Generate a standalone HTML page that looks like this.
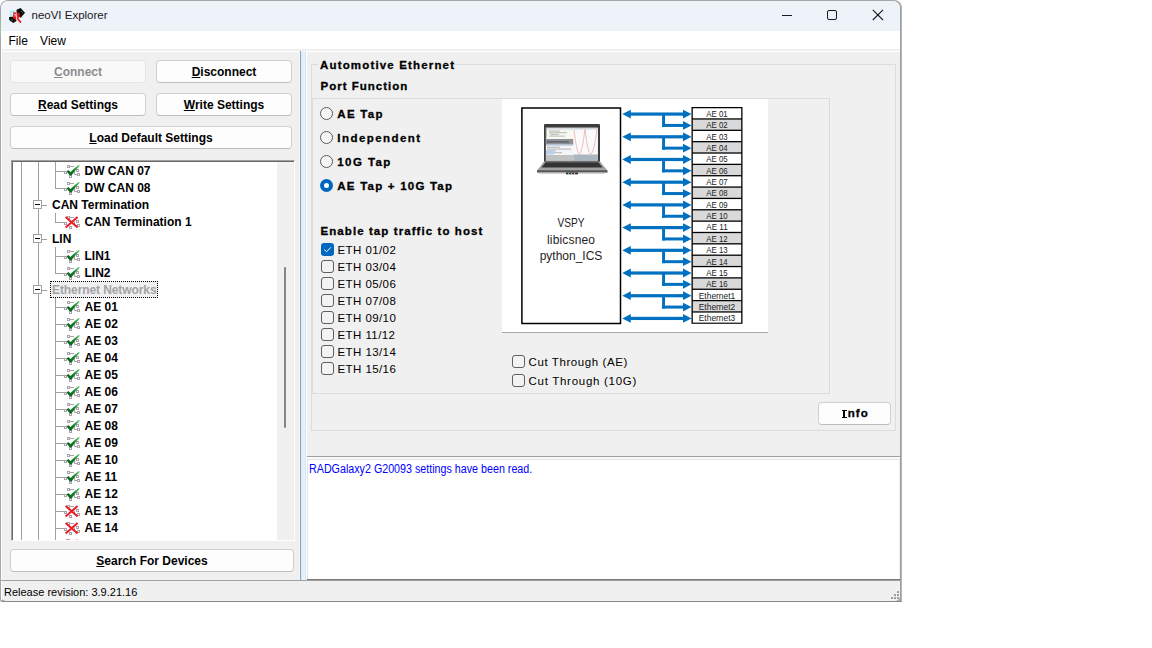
<!DOCTYPE html>
<html><head><meta charset="utf-8"><style>
html,body{margin:0;padding:0;background:#fff;}
body{width:1152px;height:648px;position:relative;overflow:hidden;font-family:"Liberation Sans",sans-serif;}
.r{position:absolute;}
.t{position:absolute;white-space:pre;line-height:1;}
svg text{font-family:"Liberation Sans",sans-serif;}
u{text-decoration:underline;text-underline-offset:1px;}
</style></head><body>
<div class="r" style="left:0px;top:0px;width:902px;height:602px;background:#a8a8a8;border-radius:8px 8px 2px 2px;"></div>
<div class="r" style="left:901px;top:8px;width:1px;height:593px;background:#b4b4b4;"></div>
<div class="r" style="left:900px;top:8px;width:1px;height:593px;background:#a0a0a0;"></div>
<div class="r" style="left:2px;top:601px;width:900px;height:1px;background:#888;"></div>
<div class="r" style="left:0px;top:22px;width:1px;height:14px;background:#a3bfa3;"></div>
<div class="r" style="left:1px;top:1px;width:899px;height:600px;background:#f0f0f0;border-radius:7px 7px 5px 5px;"></div>
<div class="r" style="left:1px;top:1px;width:899px;height:30px;background:#eef2f9;border-radius:7px 7px 0 0;"></div>
<div class="r" style="left:1px;top:31px;width:899px;height:18px;background:#fff;"></div>
<div class="r" style="left:1px;top:49px;width:899px;height:2px;background:#f0f0f0;"></div>
<div class="r" style="left:1px;top:51px;width:298px;height:1px;background:#fff;"></div>
<div class="r" style="left:307px;top:51px;width:593px;height:1px;background:#fff;"></div>
<div class="r" style="left:1px;top:31px;width:1px;height:569px;background:#fff;"></div>
<svg class="r" style="left:6px;top:4px" width="24" height="24" viewBox="6 4 24 24">
<path d="M16.5 9.8 L20.6 8.0 L25 12.8 L20.8 17.8 L16.8 15.2 Z" fill="#0a0a0a"/>
<path d="M21.2 11 L23 13" stroke="#2a7f6f" stroke-width="0.9"/>
<path d="M9 17.2 L13 16 L16.8 20.8 L13.2 23 L9.2 20 Z" fill="#0a0a0a"/>
<path d="M11 19.2 L13 20.6" stroke="#2a8080" stroke-width="0.9"/>
<path d="M10 11.6 L14.8 10.6 L15.6 13.5 L14.8 17 L10.6 16.8 Z" fill="#9fe3f3"/>
<path d="M11 12.5 L13 12 L13.5 15.5 L11.5 15.5 Z" fill="#d8f4fb"/>
<path d="M13.2 12.6 L16.2 12.6 L16.2 19.4 L13.2 18.6 Z" fill="#f21414"/>
<path d="M17 12.8 L19.6 12.8 L19.4 17.6 L17 18.6 Z" fill="#f21414"/>
<path d="M14 14.5 L15.6 14.3 L15.2 16.6" stroke="#e6e6f0" stroke-width="0.8" fill="none"/>
<path d="M17.3 18.3 L20.9 22.6" stroke="#f01818" stroke-width="1.7"/>
</svg>
<div class="t" style="left:31.5px;top:10.07px;font-size:11.5px;font-weight:400;color:#1a1a1a;">neoVI Explorer</div>
<div class="r" style="left:782px;top:15px;width:10px;height:1px;background:#1a1a1a;"></div>
<div class="r" style="left:827px;top:10px;width:10px;height:10px;border:1px solid #1a1a1a;border-radius:2px;box-sizing:border-box;"></div>
<svg class="r" style="left:872px;top:9px" width="12" height="12" viewBox="0 0 12 12">
<path d="M0.8 0.8 L11 11 M11 0.8 L0.8 11" stroke="#1a1a1a" stroke-width="1.1"/></svg>
<div class="t" style="left:8.5px;top:34.74px;font-size:12px;font-weight:400;color:#000;">File</div>
<div class="t" style="left:40.1px;top:34.74px;font-size:12px;font-weight:400;color:#000;">View</div>
<div class="r" style="left:10px;top:60px;width:136px;height:23px;background:#f9f9f9;border:1px solid #e4e4e4;border-bottom-color:#e4e4e4;border-radius:4px;box-sizing:border-box;"></div>
<div class="t" style="left:10px;top:65.84px;width:136px;text-align:center;font-size:12px;font-weight:700;color:#8d8d8d;letter-spacing:0px"><u>C</u>onnect</div>
<div class="r" style="left:156px;top:60px;width:136px;height:23px;background:#fdfdfd;border:1px solid #d0d0d0;border-bottom-color:#bdbdbd;border-radius:4px;box-sizing:border-box;"></div>
<div class="t" style="left:156px;top:65.84px;width:136px;text-align:center;font-size:12px;font-weight:700;color:#000;letter-spacing:0px"><u>D</u>isconnect</div>
<div class="r" style="left:10px;top:93px;width:136px;height:23px;background:#fdfdfd;border:1px solid #d0d0d0;border-bottom-color:#bdbdbd;border-radius:4px;box-sizing:border-box;"></div>
<div class="t" style="left:10px;top:98.84px;width:136px;text-align:center;font-size:12px;font-weight:700;color:#000;letter-spacing:0px"><u>R</u>ead Settings</div>
<div class="r" style="left:156px;top:93px;width:136px;height:23px;background:#fdfdfd;border:1px solid #d0d0d0;border-bottom-color:#bdbdbd;border-radius:4px;box-sizing:border-box;"></div>
<div class="t" style="left:156px;top:98.84px;width:136px;text-align:center;font-size:12px;font-weight:700;color:#000;letter-spacing:0px"><u>W</u>rite Settings</div>
<div class="r" style="left:10px;top:126px;width:282px;height:23px;background:#fdfdfd;border:1px solid #d0d0d0;border-bottom-color:#bdbdbd;border-radius:4px;box-sizing:border-box;"></div>
<div class="t" style="left:10px;top:131.84px;width:282px;text-align:center;font-size:12px;font-weight:700;color:#000;letter-spacing:0px"><u>L</u>oad Default Settings</div>
<div class="r" style="left:10px;top:549px;width:284px;height:23px;background:#fdfdfd;border:1px solid #d0d0d0;border-bottom-color:#bdbdbd;border-radius:4px;box-sizing:border-box;"></div>
<div class="t" style="left:10px;top:554.84px;width:284px;text-align:center;font-size:12px;font-weight:700;color:#000;letter-spacing:0px"><u>S</u>earch For Devices</div>
<div class="r" style="left:11px;top:160px;width:284px;height:381px;background:#fff;border-top:1px solid #a0a0a0;border-left:1px solid #a0a0a0;border-right:1px solid #fff;border-bottom:1px solid #fff;box-sizing:border-box;"></div>
<div class="r" style="left:12px;top:161px;width:282px;height:379px;border-top:1px solid #696969;border-left:1px solid #696969;box-sizing:border-box;"></div>
<div class="r" style="left:277px;top:162px;width:17px;height:378px;background:#f0f0f0;"></div>
<div class="r" style="left:284px;top:267px;width:2px;height:161px;background:#858585;border-radius:1px;"></div>
<div class="r" style="left:13px;top:162px;width:264px;height:378px;overflow:hidden">
<div class="r" style="left:8px;top:0px;width:1px;height:378px;background:#a0a0a0"></div>
<div class="r" style="left:25px;top:0px;width:1px;height:38px;background:#a0a0a0"></div>
<div class="r" style="left:25px;top:47px;width:1px;height:25px;background:#a0a0a0"></div>
<div class="r" style="left:25px;top:81px;width:1px;height:42px;background:#a0a0a0"></div>
<div class="r" style="left:25px;top:132px;width:1px;height:246px;background:#a0a0a0"></div>
<div class="r" style="left:42px;top:0px;width:1px;height:27px;background:#a0a0a0"></div>
<div class="r" style="left:42px;top:51px;width:1px;height:10px;background:#a0a0a0"></div>
<div class="r" style="left:42px;top:85px;width:1px;height:27px;background:#a0a0a0"></div>
<div class="r" style="left:42px;top:136px;width:1px;height:242px;background:#a0a0a0"></div>
<div class="r" style="left:43px;top:9px;width:9px;height:1px;background:#a0a0a0"></div>
<svg class="r" style="left:51px;top:3px" width="18" height="16" viewBox="0 0 18 16">
<g fill="none" stroke="#aaa3ab" stroke-width="1">
<rect x="3.5" y="0.5" width="2" height="2"/><rect x="0.5" y="6.5" width="2" height="2"/>
<rect x="12.5" y="4.5" width="2" height="2"/><rect x="13.5" y="8.5" width="2" height="2"/>
<rect x="5.5" y="10.5" width="2" height="2"/>
<path d="M6 1.5 H10 M10.5 5.5 V9.5 H13"/>
</g>
<defs><linearGradient id="gck" x1="0" y1="1" x2="1" y2="0"><stop offset="0" stop-color="#075a16"/><stop offset="0.5" stop-color="#0f8026"/><stop offset="1" stop-color="#6fcf82"/></linearGradient></defs><path d="M2.6 6.4 L4.3 5.0 L6.5 7.0 Q10.2 3.2 14.6 0.0 L15.9 0.7 Q11.2 5.0 7.4 10.4 L6.0 10.4 Z" fill="url(#gck)"/>
</svg>
<div class="t" style="left:71.5px;top:2.84px;font-size:12px;font-weight:700;color:#000;">DW CAN 07</div>
<div class="r" style="left:43px;top:26px;width:9px;height:1px;background:#a0a0a0"></div>
<svg class="r" style="left:51px;top:20px" width="18" height="16" viewBox="0 0 18 16">
<g fill="none" stroke="#aaa3ab" stroke-width="1">
<rect x="3.5" y="0.5" width="2" height="2"/><rect x="0.5" y="6.5" width="2" height="2"/>
<rect x="12.5" y="4.5" width="2" height="2"/><rect x="13.5" y="8.5" width="2" height="2"/>
<rect x="5.5" y="10.5" width="2" height="2"/>
<path d="M6 1.5 H10 M10.5 5.5 V9.5 H13"/>
</g>
<defs><linearGradient id="gck" x1="0" y1="1" x2="1" y2="0"><stop offset="0" stop-color="#075a16"/><stop offset="0.5" stop-color="#0f8026"/><stop offset="1" stop-color="#6fcf82"/></linearGradient></defs><path d="M2.6 6.4 L4.3 5.0 L6.5 7.0 Q10.2 3.2 14.6 0.0 L15.9 0.7 Q11.2 5.0 7.4 10.4 L6.0 10.4 Z" fill="url(#gck)"/>
</svg>
<div class="t" style="left:71.5px;top:19.84px;font-size:12px;font-weight:700;color:#000;">DW CAN 08</div>
<div class="r" style="left:20px;top:38px;width:9px;height:9px;border:1px solid #a0a0a0;box-sizing:border-box;background:#fff"></div>
<div class="r" style="left:22px;top:42px;width:5px;height:1px;background:#000"></div>
<div class="r" style="left:29px;top:43px;width:5px;height:1px;background:#a0a0a0"></div>
<div class="t" style="left:39px;top:36.84px;font-size:12px;font-weight:700;color:#000;">CAN Termination</div>
<div class="r" style="left:43px;top:60px;width:9px;height:1px;background:#a0a0a0"></div>
<svg class="r" style="left:51px;top:54px" width="18" height="16" viewBox="0 0 18 16">
<g fill="none" stroke="#aaa3ab" stroke-width="1">
<rect x="3.5" y="0.5" width="2" height="2"/><rect x="0.5" y="6.5" width="2" height="2"/>
<rect x="12.5" y="4.5" width="2" height="2"/><rect x="13.5" y="8.5" width="2" height="2"/>
<rect x="5.5" y="10.5" width="2" height="2"/>
<path d="M6 1.5 H10 M10.5 5.5 V9.5 H13"/>
</g>
<path d="M1.6 1.0 L13.6 11.4 M13.6 1.0 L1.6 11.4" fill="none" stroke="#ec1c24" stroke-width="2"/>
</svg>
<div class="t" style="left:71.5px;top:53.84px;font-size:12px;font-weight:700;color:#000;">CAN Termination 1</div>
<div class="r" style="left:20px;top:72px;width:9px;height:9px;border:1px solid #a0a0a0;box-sizing:border-box;background:#fff"></div>
<div class="r" style="left:22px;top:76px;width:5px;height:1px;background:#000"></div>
<div class="r" style="left:29px;top:77px;width:5px;height:1px;background:#a0a0a0"></div>
<div class="t" style="left:39px;top:70.84px;font-size:12px;font-weight:700;color:#000;">LIN</div>
<div class="r" style="left:43px;top:94px;width:9px;height:1px;background:#a0a0a0"></div>
<svg class="r" style="left:51px;top:88px" width="18" height="16" viewBox="0 0 18 16">
<g fill="none" stroke="#aaa3ab" stroke-width="1">
<rect x="3.5" y="0.5" width="2" height="2"/><rect x="0.5" y="6.5" width="2" height="2"/>
<rect x="12.5" y="4.5" width="2" height="2"/><rect x="13.5" y="8.5" width="2" height="2"/>
<rect x="5.5" y="10.5" width="2" height="2"/>
<path d="M6 1.5 H10 M10.5 5.5 V9.5 H13"/>
</g>
<defs><linearGradient id="gck" x1="0" y1="1" x2="1" y2="0"><stop offset="0" stop-color="#075a16"/><stop offset="0.5" stop-color="#0f8026"/><stop offset="1" stop-color="#6fcf82"/></linearGradient></defs><path d="M2.6 6.4 L4.3 5.0 L6.5 7.0 Q10.2 3.2 14.6 0.0 L15.9 0.7 Q11.2 5.0 7.4 10.4 L6.0 10.4 Z" fill="url(#gck)"/>
</svg>
<div class="t" style="left:71.5px;top:87.84px;font-size:12px;font-weight:700;color:#000;">LIN1</div>
<div class="r" style="left:43px;top:111px;width:9px;height:1px;background:#a0a0a0"></div>
<svg class="r" style="left:51px;top:105px" width="18" height="16" viewBox="0 0 18 16">
<g fill="none" stroke="#aaa3ab" stroke-width="1">
<rect x="3.5" y="0.5" width="2" height="2"/><rect x="0.5" y="6.5" width="2" height="2"/>
<rect x="12.5" y="4.5" width="2" height="2"/><rect x="13.5" y="8.5" width="2" height="2"/>
<rect x="5.5" y="10.5" width="2" height="2"/>
<path d="M6 1.5 H10 M10.5 5.5 V9.5 H13"/>
</g>
<defs><linearGradient id="gck" x1="0" y1="1" x2="1" y2="0"><stop offset="0" stop-color="#075a16"/><stop offset="0.5" stop-color="#0f8026"/><stop offset="1" stop-color="#6fcf82"/></linearGradient></defs><path d="M2.6 6.4 L4.3 5.0 L6.5 7.0 Q10.2 3.2 14.6 0.0 L15.9 0.7 Q11.2 5.0 7.4 10.4 L6.0 10.4 Z" fill="url(#gck)"/>
</svg>
<div class="t" style="left:71.5px;top:104.84px;font-size:12px;font-weight:700;color:#000;">LIN2</div>
<div class="r" style="left:20px;top:123px;width:9px;height:9px;border:1px solid #a0a0a0;box-sizing:border-box;background:#fff"></div>
<div class="r" style="left:22px;top:127px;width:5px;height:1px;background:#000"></div>
<div class="r" style="left:29px;top:128px;width:5px;height:1px;background:#a0a0a0"></div>
<div class="r" style="left:37px;top:119px;width:108px;height:17px;background:#f0f0f0;border:1px dotted #000;box-sizing:border-box"></div>
<div class="t" style="left:39px;top:121.84px;font-size:12px;font-weight:700;color:#a3a3a3;letter-spacing:-0.09px">Ethernet Networks</div>
<div class="r" style="left:43px;top:145px;width:9px;height:1px;background:#a0a0a0"></div>
<svg class="r" style="left:51px;top:139px" width="18" height="16" viewBox="0 0 18 16">
<g fill="none" stroke="#aaa3ab" stroke-width="1">
<rect x="3.5" y="0.5" width="2" height="2"/><rect x="0.5" y="6.5" width="2" height="2"/>
<rect x="12.5" y="4.5" width="2" height="2"/><rect x="13.5" y="8.5" width="2" height="2"/>
<rect x="5.5" y="10.5" width="2" height="2"/>
<path d="M6 1.5 H10 M10.5 5.5 V9.5 H13"/>
</g>
<defs><linearGradient id="gck" x1="0" y1="1" x2="1" y2="0"><stop offset="0" stop-color="#075a16"/><stop offset="0.5" stop-color="#0f8026"/><stop offset="1" stop-color="#6fcf82"/></linearGradient></defs><path d="M2.6 6.4 L4.3 5.0 L6.5 7.0 Q10.2 3.2 14.6 0.0 L15.9 0.7 Q11.2 5.0 7.4 10.4 L6.0 10.4 Z" fill="url(#gck)"/>
</svg>
<div class="t" style="left:71.5px;top:138.84px;font-size:12px;font-weight:700;color:#000;">AE 01</div>
<div class="r" style="left:43px;top:162px;width:9px;height:1px;background:#a0a0a0"></div>
<svg class="r" style="left:51px;top:156px" width="18" height="16" viewBox="0 0 18 16">
<g fill="none" stroke="#aaa3ab" stroke-width="1">
<rect x="3.5" y="0.5" width="2" height="2"/><rect x="0.5" y="6.5" width="2" height="2"/>
<rect x="12.5" y="4.5" width="2" height="2"/><rect x="13.5" y="8.5" width="2" height="2"/>
<rect x="5.5" y="10.5" width="2" height="2"/>
<path d="M6 1.5 H10 M10.5 5.5 V9.5 H13"/>
</g>
<defs><linearGradient id="gck" x1="0" y1="1" x2="1" y2="0"><stop offset="0" stop-color="#075a16"/><stop offset="0.5" stop-color="#0f8026"/><stop offset="1" stop-color="#6fcf82"/></linearGradient></defs><path d="M2.6 6.4 L4.3 5.0 L6.5 7.0 Q10.2 3.2 14.6 0.0 L15.9 0.7 Q11.2 5.0 7.4 10.4 L6.0 10.4 Z" fill="url(#gck)"/>
</svg>
<div class="t" style="left:71.5px;top:155.84px;font-size:12px;font-weight:700;color:#000;">AE 02</div>
<div class="r" style="left:43px;top:179px;width:9px;height:1px;background:#a0a0a0"></div>
<svg class="r" style="left:51px;top:173px" width="18" height="16" viewBox="0 0 18 16">
<g fill="none" stroke="#aaa3ab" stroke-width="1">
<rect x="3.5" y="0.5" width="2" height="2"/><rect x="0.5" y="6.5" width="2" height="2"/>
<rect x="12.5" y="4.5" width="2" height="2"/><rect x="13.5" y="8.5" width="2" height="2"/>
<rect x="5.5" y="10.5" width="2" height="2"/>
<path d="M6 1.5 H10 M10.5 5.5 V9.5 H13"/>
</g>
<defs><linearGradient id="gck" x1="0" y1="1" x2="1" y2="0"><stop offset="0" stop-color="#075a16"/><stop offset="0.5" stop-color="#0f8026"/><stop offset="1" stop-color="#6fcf82"/></linearGradient></defs><path d="M2.6 6.4 L4.3 5.0 L6.5 7.0 Q10.2 3.2 14.6 0.0 L15.9 0.7 Q11.2 5.0 7.4 10.4 L6.0 10.4 Z" fill="url(#gck)"/>
</svg>
<div class="t" style="left:71.5px;top:172.84px;font-size:12px;font-weight:700;color:#000;">AE 03</div>
<div class="r" style="left:43px;top:196px;width:9px;height:1px;background:#a0a0a0"></div>
<svg class="r" style="left:51px;top:190px" width="18" height="16" viewBox="0 0 18 16">
<g fill="none" stroke="#aaa3ab" stroke-width="1">
<rect x="3.5" y="0.5" width="2" height="2"/><rect x="0.5" y="6.5" width="2" height="2"/>
<rect x="12.5" y="4.5" width="2" height="2"/><rect x="13.5" y="8.5" width="2" height="2"/>
<rect x="5.5" y="10.5" width="2" height="2"/>
<path d="M6 1.5 H10 M10.5 5.5 V9.5 H13"/>
</g>
<defs><linearGradient id="gck" x1="0" y1="1" x2="1" y2="0"><stop offset="0" stop-color="#075a16"/><stop offset="0.5" stop-color="#0f8026"/><stop offset="1" stop-color="#6fcf82"/></linearGradient></defs><path d="M2.6 6.4 L4.3 5.0 L6.5 7.0 Q10.2 3.2 14.6 0.0 L15.9 0.7 Q11.2 5.0 7.4 10.4 L6.0 10.4 Z" fill="url(#gck)"/>
</svg>
<div class="t" style="left:71.5px;top:189.84px;font-size:12px;font-weight:700;color:#000;">AE 04</div>
<div class="r" style="left:43px;top:213px;width:9px;height:1px;background:#a0a0a0"></div>
<svg class="r" style="left:51px;top:207px" width="18" height="16" viewBox="0 0 18 16">
<g fill="none" stroke="#aaa3ab" stroke-width="1">
<rect x="3.5" y="0.5" width="2" height="2"/><rect x="0.5" y="6.5" width="2" height="2"/>
<rect x="12.5" y="4.5" width="2" height="2"/><rect x="13.5" y="8.5" width="2" height="2"/>
<rect x="5.5" y="10.5" width="2" height="2"/>
<path d="M6 1.5 H10 M10.5 5.5 V9.5 H13"/>
</g>
<defs><linearGradient id="gck" x1="0" y1="1" x2="1" y2="0"><stop offset="0" stop-color="#075a16"/><stop offset="0.5" stop-color="#0f8026"/><stop offset="1" stop-color="#6fcf82"/></linearGradient></defs><path d="M2.6 6.4 L4.3 5.0 L6.5 7.0 Q10.2 3.2 14.6 0.0 L15.9 0.7 Q11.2 5.0 7.4 10.4 L6.0 10.4 Z" fill="url(#gck)"/>
</svg>
<div class="t" style="left:71.5px;top:206.84px;font-size:12px;font-weight:700;color:#000;">AE 05</div>
<div class="r" style="left:43px;top:230px;width:9px;height:1px;background:#a0a0a0"></div>
<svg class="r" style="left:51px;top:224px" width="18" height="16" viewBox="0 0 18 16">
<g fill="none" stroke="#aaa3ab" stroke-width="1">
<rect x="3.5" y="0.5" width="2" height="2"/><rect x="0.5" y="6.5" width="2" height="2"/>
<rect x="12.5" y="4.5" width="2" height="2"/><rect x="13.5" y="8.5" width="2" height="2"/>
<rect x="5.5" y="10.5" width="2" height="2"/>
<path d="M6 1.5 H10 M10.5 5.5 V9.5 H13"/>
</g>
<defs><linearGradient id="gck" x1="0" y1="1" x2="1" y2="0"><stop offset="0" stop-color="#075a16"/><stop offset="0.5" stop-color="#0f8026"/><stop offset="1" stop-color="#6fcf82"/></linearGradient></defs><path d="M2.6 6.4 L4.3 5.0 L6.5 7.0 Q10.2 3.2 14.6 0.0 L15.9 0.7 Q11.2 5.0 7.4 10.4 L6.0 10.4 Z" fill="url(#gck)"/>
</svg>
<div class="t" style="left:71.5px;top:223.84px;font-size:12px;font-weight:700;color:#000;">AE 06</div>
<div class="r" style="left:43px;top:247px;width:9px;height:1px;background:#a0a0a0"></div>
<svg class="r" style="left:51px;top:241px" width="18" height="16" viewBox="0 0 18 16">
<g fill="none" stroke="#aaa3ab" stroke-width="1">
<rect x="3.5" y="0.5" width="2" height="2"/><rect x="0.5" y="6.5" width="2" height="2"/>
<rect x="12.5" y="4.5" width="2" height="2"/><rect x="13.5" y="8.5" width="2" height="2"/>
<rect x="5.5" y="10.5" width="2" height="2"/>
<path d="M6 1.5 H10 M10.5 5.5 V9.5 H13"/>
</g>
<defs><linearGradient id="gck" x1="0" y1="1" x2="1" y2="0"><stop offset="0" stop-color="#075a16"/><stop offset="0.5" stop-color="#0f8026"/><stop offset="1" stop-color="#6fcf82"/></linearGradient></defs><path d="M2.6 6.4 L4.3 5.0 L6.5 7.0 Q10.2 3.2 14.6 0.0 L15.9 0.7 Q11.2 5.0 7.4 10.4 L6.0 10.4 Z" fill="url(#gck)"/>
</svg>
<div class="t" style="left:71.5px;top:240.84px;font-size:12px;font-weight:700;color:#000;">AE 07</div>
<div class="r" style="left:43px;top:264px;width:9px;height:1px;background:#a0a0a0"></div>
<svg class="r" style="left:51px;top:258px" width="18" height="16" viewBox="0 0 18 16">
<g fill="none" stroke="#aaa3ab" stroke-width="1">
<rect x="3.5" y="0.5" width="2" height="2"/><rect x="0.5" y="6.5" width="2" height="2"/>
<rect x="12.5" y="4.5" width="2" height="2"/><rect x="13.5" y="8.5" width="2" height="2"/>
<rect x="5.5" y="10.5" width="2" height="2"/>
<path d="M6 1.5 H10 M10.5 5.5 V9.5 H13"/>
</g>
<defs><linearGradient id="gck" x1="0" y1="1" x2="1" y2="0"><stop offset="0" stop-color="#075a16"/><stop offset="0.5" stop-color="#0f8026"/><stop offset="1" stop-color="#6fcf82"/></linearGradient></defs><path d="M2.6 6.4 L4.3 5.0 L6.5 7.0 Q10.2 3.2 14.6 0.0 L15.9 0.7 Q11.2 5.0 7.4 10.4 L6.0 10.4 Z" fill="url(#gck)"/>
</svg>
<div class="t" style="left:71.5px;top:257.84px;font-size:12px;font-weight:700;color:#000;">AE 08</div>
<div class="r" style="left:43px;top:281px;width:9px;height:1px;background:#a0a0a0"></div>
<svg class="r" style="left:51px;top:275px" width="18" height="16" viewBox="0 0 18 16">
<g fill="none" stroke="#aaa3ab" stroke-width="1">
<rect x="3.5" y="0.5" width="2" height="2"/><rect x="0.5" y="6.5" width="2" height="2"/>
<rect x="12.5" y="4.5" width="2" height="2"/><rect x="13.5" y="8.5" width="2" height="2"/>
<rect x="5.5" y="10.5" width="2" height="2"/>
<path d="M6 1.5 H10 M10.5 5.5 V9.5 H13"/>
</g>
<defs><linearGradient id="gck" x1="0" y1="1" x2="1" y2="0"><stop offset="0" stop-color="#075a16"/><stop offset="0.5" stop-color="#0f8026"/><stop offset="1" stop-color="#6fcf82"/></linearGradient></defs><path d="M2.6 6.4 L4.3 5.0 L6.5 7.0 Q10.2 3.2 14.6 0.0 L15.9 0.7 Q11.2 5.0 7.4 10.4 L6.0 10.4 Z" fill="url(#gck)"/>
</svg>
<div class="t" style="left:71.5px;top:274.84px;font-size:12px;font-weight:700;color:#000;">AE 09</div>
<div class="r" style="left:43px;top:298px;width:9px;height:1px;background:#a0a0a0"></div>
<svg class="r" style="left:51px;top:292px" width="18" height="16" viewBox="0 0 18 16">
<g fill="none" stroke="#aaa3ab" stroke-width="1">
<rect x="3.5" y="0.5" width="2" height="2"/><rect x="0.5" y="6.5" width="2" height="2"/>
<rect x="12.5" y="4.5" width="2" height="2"/><rect x="13.5" y="8.5" width="2" height="2"/>
<rect x="5.5" y="10.5" width="2" height="2"/>
<path d="M6 1.5 H10 M10.5 5.5 V9.5 H13"/>
</g>
<defs><linearGradient id="gck" x1="0" y1="1" x2="1" y2="0"><stop offset="0" stop-color="#075a16"/><stop offset="0.5" stop-color="#0f8026"/><stop offset="1" stop-color="#6fcf82"/></linearGradient></defs><path d="M2.6 6.4 L4.3 5.0 L6.5 7.0 Q10.2 3.2 14.6 0.0 L15.9 0.7 Q11.2 5.0 7.4 10.4 L6.0 10.4 Z" fill="url(#gck)"/>
</svg>
<div class="t" style="left:71.5px;top:291.84px;font-size:12px;font-weight:700;color:#000;">AE 10</div>
<div class="r" style="left:43px;top:315px;width:9px;height:1px;background:#a0a0a0"></div>
<svg class="r" style="left:51px;top:309px" width="18" height="16" viewBox="0 0 18 16">
<g fill="none" stroke="#aaa3ab" stroke-width="1">
<rect x="3.5" y="0.5" width="2" height="2"/><rect x="0.5" y="6.5" width="2" height="2"/>
<rect x="12.5" y="4.5" width="2" height="2"/><rect x="13.5" y="8.5" width="2" height="2"/>
<rect x="5.5" y="10.5" width="2" height="2"/>
<path d="M6 1.5 H10 M10.5 5.5 V9.5 H13"/>
</g>
<defs><linearGradient id="gck" x1="0" y1="1" x2="1" y2="0"><stop offset="0" stop-color="#075a16"/><stop offset="0.5" stop-color="#0f8026"/><stop offset="1" stop-color="#6fcf82"/></linearGradient></defs><path d="M2.6 6.4 L4.3 5.0 L6.5 7.0 Q10.2 3.2 14.6 0.0 L15.9 0.7 Q11.2 5.0 7.4 10.4 L6.0 10.4 Z" fill="url(#gck)"/>
</svg>
<div class="t" style="left:71.5px;top:308.84px;font-size:12px;font-weight:700;color:#000;">AE 11</div>
<div class="r" style="left:43px;top:332px;width:9px;height:1px;background:#a0a0a0"></div>
<svg class="r" style="left:51px;top:326px" width="18" height="16" viewBox="0 0 18 16">
<g fill="none" stroke="#aaa3ab" stroke-width="1">
<rect x="3.5" y="0.5" width="2" height="2"/><rect x="0.5" y="6.5" width="2" height="2"/>
<rect x="12.5" y="4.5" width="2" height="2"/><rect x="13.5" y="8.5" width="2" height="2"/>
<rect x="5.5" y="10.5" width="2" height="2"/>
<path d="M6 1.5 H10 M10.5 5.5 V9.5 H13"/>
</g>
<defs><linearGradient id="gck" x1="0" y1="1" x2="1" y2="0"><stop offset="0" stop-color="#075a16"/><stop offset="0.5" stop-color="#0f8026"/><stop offset="1" stop-color="#6fcf82"/></linearGradient></defs><path d="M2.6 6.4 L4.3 5.0 L6.5 7.0 Q10.2 3.2 14.6 0.0 L15.9 0.7 Q11.2 5.0 7.4 10.4 L6.0 10.4 Z" fill="url(#gck)"/>
</svg>
<div class="t" style="left:71.5px;top:325.84px;font-size:12px;font-weight:700;color:#000;">AE 12</div>
<div class="r" style="left:43px;top:349px;width:9px;height:1px;background:#a0a0a0"></div>
<svg class="r" style="left:51px;top:343px" width="18" height="16" viewBox="0 0 18 16">
<g fill="none" stroke="#aaa3ab" stroke-width="1">
<rect x="3.5" y="0.5" width="2" height="2"/><rect x="0.5" y="6.5" width="2" height="2"/>
<rect x="12.5" y="4.5" width="2" height="2"/><rect x="13.5" y="8.5" width="2" height="2"/>
<rect x="5.5" y="10.5" width="2" height="2"/>
<path d="M6 1.5 H10 M10.5 5.5 V9.5 H13"/>
</g>
<path d="M1.6 1.0 L13.6 11.4 M13.6 1.0 L1.6 11.4" fill="none" stroke="#ec1c24" stroke-width="2"/>
</svg>
<div class="t" style="left:71.5px;top:342.84px;font-size:12px;font-weight:700;color:#000;">AE 13</div>
<div class="r" style="left:43px;top:366px;width:9px;height:1px;background:#a0a0a0"></div>
<svg class="r" style="left:51px;top:360px" width="18" height="16" viewBox="0 0 18 16">
<g fill="none" stroke="#aaa3ab" stroke-width="1">
<rect x="3.5" y="0.5" width="2" height="2"/><rect x="0.5" y="6.5" width="2" height="2"/>
<rect x="12.5" y="4.5" width="2" height="2"/><rect x="13.5" y="8.5" width="2" height="2"/>
<rect x="5.5" y="10.5" width="2" height="2"/>
<path d="M6 1.5 H10 M10.5 5.5 V9.5 H13"/>
</g>
<path d="M1.6 1.0 L13.6 11.4 M13.6 1.0 L1.6 11.4" fill="none" stroke="#ec1c24" stroke-width="2"/>
</svg>
<div class="t" style="left:71.5px;top:359.84px;font-size:12px;font-weight:700;color:#000;">AE 14</div>
<div class="r" style="left:43px;top:383px;width:9px;height:1px;background:#a0a0a0"></div>
<svg class="r" style="left:51px;top:377px" width="18" height="16" viewBox="0 0 18 16">
<g fill="none" stroke="#aaa3ab" stroke-width="1">
<rect x="3.5" y="0.5" width="2" height="2"/><rect x="0.5" y="6.5" width="2" height="2"/>
<rect x="12.5" y="4.5" width="2" height="2"/><rect x="13.5" y="8.5" width="2" height="2"/>
<rect x="5.5" y="10.5" width="2" height="2"/>
<path d="M6 1.5 H10 M10.5 5.5 V9.5 H13"/>
</g>
<path d="M1.6 1.0 L13.6 11.4 M13.6 1.0 L1.6 11.4" fill="none" stroke="#ec1c24" stroke-width="2"/>
</svg>
<div class="t" style="left:71.5px;top:376.84px;font-size:12px;font-weight:700;color:#000;">AE 15</div>
</div>
<div class="r" style="left:1px;top:580px;width:300px;height:1px;background:#a0a0a0;"></div>
<div class="r" style="left:300px;top:51px;width:1px;height:530px;background:#a0a0a0;"></div>
<div class="r" style="left:301px;top:51px;width:5px;height:529px;background:linear-gradient(90deg,#d4ecfc 0,#d4ecfc 1px,#e0f0fc 1px,#e0f0fc 2px,#e7f2fc 2px,#e7f2fc 4px,#cce6fc 4px);border-radius:3px 3px 0 0;"></div>
<div class="r" style="left:299px;top:51px;width:1px;height:530px;background:#f5f5f5;"></div>
<div class="r" style="left:306px;top:51px;width:1px;height:529px;background:#fff;"></div>
<div class="r" style="left:311px;top:64px;width:585px;height:367px;border:1px solid #dcdcdc;box-sizing:border-box;"></div>
<div class="r" style="left:318px;top:58px;width:136.3px;height:12px;background:#f0f0f0;"></div>
<div class="t" style="left:320px;top:59.57px;font-size:11.5px;font-weight:700;color:#000;letter-spacing:1.16px;-webkit-text-stroke:0.3px #000">Automotive Ethernet</div>
<div class="t" style="left:320.5px;top:80.77px;font-size:11.5px;font-weight:700;color:#000;letter-spacing:1.0px;-webkit-text-stroke:0.3px #000">Port Function</div>
<div class="r" style="left:312px;top:98px;width:518px;height:296px;border:1px solid #dcdcdc;box-sizing:border-box;"></div>
<div class="r" style="left:320px;top:107px;width:13px;height:13px;border-radius:50%;border:1px solid #5a5a5a;box-sizing:border-box;background:#f5f5f5"></div>
<div class="t" style="left:337.3px;top:108.87px;font-size:11.5px;font-weight:700;color:#000;letter-spacing:1.3px;-webkit-text-stroke:0.3px #000">AE Tap</div>
<div class="r" style="left:320px;top:131px;width:13px;height:13px;border-radius:50%;border:1px solid #5a5a5a;box-sizing:border-box;background:#f5f5f5"></div>
<div class="t" style="left:337.3px;top:132.87px;font-size:11.5px;font-weight:700;color:#000;letter-spacing:1.45px;-webkit-text-stroke:0.3px #000">Independent</div>
<div class="r" style="left:320px;top:155px;width:13px;height:13px;border-radius:50%;border:1px solid #5a5a5a;box-sizing:border-box;background:#f5f5f5"></div>
<div class="t" style="left:337.3px;top:156.87px;font-size:11.5px;font-weight:700;color:#000;letter-spacing:1.42px;-webkit-text-stroke:0.3px #000">10G Tap</div>
<div class="r" style="left:320px;top:179px;width:13px;height:13px;border-radius:50%;background:#0067c0"></div>
<div class="r" style="left:324px;top:183px;width:5px;height:5px;border-radius:50%;background:#fff"></div>
<div class="t" style="left:337.3px;top:180.87px;font-size:11.5px;font-weight:700;color:#000;letter-spacing:1.22px;-webkit-text-stroke:0.3px #000">AE Tap + 10G Tap</div>
<div class="t" style="left:320.5px;top:226.07px;font-size:11.5px;font-weight:700;color:#000;letter-spacing:1.08px;-webkit-text-stroke:0.3px #000">Enable tap traffic to host</div>
<div class="r" style="left:321px;top:243px;width:13px;height:13px;border-radius:3px;background:#0067c0"></div>
<svg class="r" style="left:321px;top:243px" width="13" height="13" viewBox="0 0 13 13"><path d="M3.2 6.6 L5.5 8.8 L9.8 4.4" fill="none" stroke="#fff" stroke-width="1"/></svg>
<div class="t" style="left:337.5px;top:244.77px;font-size:11.5px;font-weight:400;color:#000;letter-spacing:0.42px">ETH 01/02</div>
<div class="r" style="left:321px;top:260px;width:13px;height:13px;border-radius:3px;border:1px solid #5f5f5f;box-sizing:border-box;background:#f3f3f3"></div>
<div class="t" style="left:337.5px;top:261.77px;font-size:11.5px;font-weight:400;color:#000;letter-spacing:0.42px">ETH 03/04</div>
<div class="r" style="left:321px;top:277px;width:13px;height:13px;border-radius:3px;border:1px solid #5f5f5f;box-sizing:border-box;background:#f3f3f3"></div>
<div class="t" style="left:337.5px;top:278.77px;font-size:11.5px;font-weight:400;color:#000;letter-spacing:0.42px">ETH 05/06</div>
<div class="r" style="left:321px;top:294px;width:13px;height:13px;border-radius:3px;border:1px solid #5f5f5f;box-sizing:border-box;background:#f3f3f3"></div>
<div class="t" style="left:337.5px;top:295.77px;font-size:11.5px;font-weight:400;color:#000;letter-spacing:0.42px">ETH 07/08</div>
<div class="r" style="left:321px;top:311px;width:13px;height:13px;border-radius:3px;border:1px solid #5f5f5f;box-sizing:border-box;background:#f3f3f3"></div>
<div class="t" style="left:337.5px;top:312.77px;font-size:11.5px;font-weight:400;color:#000;letter-spacing:0.42px">ETH 09/10</div>
<div class="r" style="left:321px;top:328px;width:13px;height:13px;border-radius:3px;border:1px solid #5f5f5f;box-sizing:border-box;background:#f3f3f3"></div>
<div class="t" style="left:337.5px;top:329.77px;font-size:11.5px;font-weight:400;color:#000;letter-spacing:0.42px">ETH 11/12</div>
<div class="r" style="left:321px;top:345px;width:13px;height:13px;border-radius:3px;border:1px solid #5f5f5f;box-sizing:border-box;background:#f3f3f3"></div>
<div class="t" style="left:337.5px;top:346.77px;font-size:11.5px;font-weight:400;color:#000;letter-spacing:0.42px">ETH 13/14</div>
<div class="r" style="left:321px;top:362px;width:13px;height:13px;border-radius:3px;border:1px solid #5f5f5f;box-sizing:border-box;background:#f3f3f3"></div>
<div class="t" style="left:337.5px;top:363.77px;font-size:11.5px;font-weight:400;color:#000;letter-spacing:0.42px">ETH 15/16</div>
<div class="r" style="left:512px;top:355px;width:13px;height:13px;border-radius:3px;border:1px solid #5f5f5f;box-sizing:border-box;background:#f3f3f3"></div>
<div class="t" style="left:528.5px;top:356.77px;font-size:11.5px;font-weight:400;color:#000;letter-spacing:0.6px">Cut Through (AE)</div>
<div class="r" style="left:512px;top:374px;width:13px;height:13px;border-radius:3px;border:1px solid #5f5f5f;box-sizing:border-box;background:#f3f3f3"></div>
<div class="t" style="left:528.5px;top:375.77px;font-size:11.5px;font-weight:400;color:#000;letter-spacing:0.72px">Cut Through (10G)</div>
<div class="r" style="left:818px;top:402px;width:73px;height:23px;background:#fdfdfd;border:1px solid #d0d0d0;border-bottom-color:#bdbdbd;border-radius:4px;box-sizing:border-box;"></div>
<div class="t" style="left:818px;top:407.84px;width:73px;text-align:center;font-size:12px;font-weight:700;color:#000;letter-spacing:0px"></div>
<div class="r" style="left:841.5px;top:409.9px;width:5px;height:1.1px;background:#000;"></div>
<div class="r" style="left:841.5px;top:416.7px;width:5px;height:1.1px;background:#000;"></div>
<div class="r" style="left:843px;top:410px;width:2px;height:7.5px;background:#000;"></div>
<div class="t" style="left:847.8px;top:408.27px;font-size:11.5px;font-weight:700;color:#000;letter-spacing:1.0px;-webkit-text-stroke:0.3px #000">nfo</div>
<div class="r" style="left:502px;top:99px;width:266px;height:233px;background:#fff;"></div>
<div class="r" style="left:502px;top:332px;width:266px;height:1px;background:#a8a8a8;"></div>
<svg class="r" style="left:502px;top:99px" width="266" height="234" viewBox="502 99 266 234">
<rect x="521.9" y="108" width="98.6" height="215.5" fill="#fff" stroke="#000" stroke-width="1.5"/>
<g>
<path d="M544 125 Q544 124 545 124 L599 124 Q600 124 600 125 L600 162 L544 162 Z" fill="#3d3d3d"/>
<rect x="545.8" y="127.6" width="52" height="33" fill="#f4f5f6"/>
<rect x="546" y="128" width="27.5" height="10.5" fill="#f7f8f2"/>
<rect x="546" y="128" width="27.5" height="1.6" fill="#d8dde4"/><path d="M546.5 128 V138 M549 131 H560 M549 132.7 H567 M550 134.4 H559 M549 136.1 H565" stroke="#9aa59a" stroke-width="0.7"/>
<rect x="546" y="139" width="27.5" height="5.5" fill="#8c8f93"/>
<rect x="547" y="141" width="22" height="1.6" fill="#5f6670"/>
<rect x="546" y="144.6" width="27.5" height="1" fill="#a9c4dc"/>
<path d="M547 147.3 H560 M547 149.1 H571 M547 150.9 H556 M547 152.7 H562" stroke="#9a9a9a" stroke-width="0.7"/><rect x="546" y="150.5" width="8" height="4" fill="#bcd0e8"/>
<rect x="546" y="155" width="27.5" height="5.7" fill="#bfc1c3"/>
<rect x="573.5" y="128" width="24.3" height="26.5" fill="#fbfafa"/>
<path d="M574 130 Q577 155 579.5 154 Q582 153 585 129 Q588 155 591 154 Q594 153 597 129" fill="none" stroke="#eaa2a2" stroke-width="0.7"/>
<rect x="573.5" y="154.5" width="24.3" height="6.2" fill="#aab6c2"/><rect x="573.5" y="128" width="24.3" height="1.5" fill="#d0d6dc"/>
<path d="M544 161.6 L600 161.6 L607.5 170.5 L537 170.5 Z" fill="#a2a2a2"/>
<path d="M545.5 162.3 L598.5 162.3 L602.5 167.5 L541.5 167.5 Z" fill="#333"/>
<rect x="537" y="170.2" width="70.5" height="2.4" fill="#555"/><rect x="539" y="172.6" width="66" height="1.2" fill="#c8c8c8"/>
<rect x="566" y="172.5" width="12" height="1.8" fill="#2a2a2a"/>
<rect x="568" y="172.8" width="1.2" height="1.2" fill="#7c9"/>
<rect x="571" y="172.8" width="1.2" height="1.2" fill="#8af"/>
<rect x="574" y="172.8" width="1.2" height="1.2" fill="#e99"/>
</g>
<text x="571" y="226.6" text-anchor="middle" font-family="Liberation Sans" font-size="12" fill="#1e1e1e" textLength="27" lengthAdjust="spacingAndGlyphs">VSPY</text>
<text x="571" y="244" text-anchor="middle" font-family="Liberation Sans" font-size="12" fill="#1e1e1e" textLength="48" lengthAdjust="spacing">libicsneo</text>
<text x="571" y="260.1" text-anchor="middle" font-family="Liberation Sans" font-size="12" fill="#1e1e1e">python_ICS</text>
<rect x="691.5" y="107.0" width="51" height="216.8" fill="#000"/>
<rect x="692.8" y="108.25" width="48.4" height="10.05" fill="#fff"/>
<text x="717" y="116.95" text-anchor="middle" font-family="Liberation Sans" font-size="8.2" textLength="21.3" lengthAdjust="spacingAndGlyphs" fill="#222">AE 01</text>
<rect x="692.8" y="119.60" width="48.4" height="10.05" fill="#d9d9d9"/>
<text x="717" y="128.31" text-anchor="middle" font-family="Liberation Sans" font-size="8.2" textLength="21.3" lengthAdjust="spacingAndGlyphs" fill="#222">AE 02</text>
<rect x="692.8" y="130.96" width="48.4" height="10.05" fill="#fff"/>
<text x="717" y="139.66" text-anchor="middle" font-family="Liberation Sans" font-size="8.2" textLength="21.3" lengthAdjust="spacingAndGlyphs" fill="#222">AE 03</text>
<rect x="692.8" y="142.31" width="48.4" height="10.05" fill="#d9d9d9"/>
<text x="717" y="151.01" text-anchor="middle" font-family="Liberation Sans" font-size="8.2" textLength="21.3" lengthAdjust="spacingAndGlyphs" fill="#222">AE 04</text>
<rect x="692.8" y="153.66" width="48.4" height="10.05" fill="#fff"/>
<text x="717" y="162.37" text-anchor="middle" font-family="Liberation Sans" font-size="8.2" textLength="21.3" lengthAdjust="spacingAndGlyphs" fill="#222">AE 05</text>
<rect x="692.8" y="165.02" width="48.4" height="10.05" fill="#d9d9d9"/>
<text x="717" y="173.72" text-anchor="middle" font-family="Liberation Sans" font-size="8.2" textLength="21.3" lengthAdjust="spacingAndGlyphs" fill="#222">AE 06</text>
<rect x="692.8" y="176.37" width="48.4" height="10.05" fill="#fff"/>
<text x="717" y="185.07" text-anchor="middle" font-family="Liberation Sans" font-size="8.2" textLength="21.3" lengthAdjust="spacingAndGlyphs" fill="#222">AE 07</text>
<rect x="692.8" y="187.72" width="48.4" height="10.05" fill="#d9d9d9"/>
<text x="717" y="196.42" text-anchor="middle" font-family="Liberation Sans" font-size="8.2" textLength="21.3" lengthAdjust="spacingAndGlyphs" fill="#222">AE 08</text>
<rect x="692.8" y="199.07" width="48.4" height="10.05" fill="#fff"/>
<text x="717" y="207.78" text-anchor="middle" font-family="Liberation Sans" font-size="8.2" textLength="21.3" lengthAdjust="spacingAndGlyphs" fill="#222">AE 09</text>
<rect x="692.8" y="210.43" width="48.4" height="10.05" fill="#d9d9d9"/>
<text x="717" y="219.13" text-anchor="middle" font-family="Liberation Sans" font-size="8.2" textLength="21.3" lengthAdjust="spacingAndGlyphs" fill="#222">AE 10</text>
<rect x="692.8" y="221.78" width="48.4" height="10.05" fill="#fff"/>
<text x="717" y="230.48" text-anchor="middle" font-family="Liberation Sans" font-size="8.2" textLength="21.3" lengthAdjust="spacingAndGlyphs" fill="#222">AE 11</text>
<rect x="692.8" y="233.13" width="48.4" height="10.05" fill="#d9d9d9"/>
<text x="717" y="241.84" text-anchor="middle" font-family="Liberation Sans" font-size="8.2" textLength="21.3" lengthAdjust="spacingAndGlyphs" fill="#222">AE 12</text>
<rect x="692.8" y="244.49" width="48.4" height="10.05" fill="#fff"/>
<text x="717" y="253.19" text-anchor="middle" font-family="Liberation Sans" font-size="8.2" textLength="21.3" lengthAdjust="spacingAndGlyphs" fill="#222">AE 13</text>
<rect x="692.8" y="255.84" width="48.4" height="10.05" fill="#d9d9d9"/>
<text x="717" y="264.54" text-anchor="middle" font-family="Liberation Sans" font-size="8.2" textLength="21.3" lengthAdjust="spacingAndGlyphs" fill="#222">AE 14</text>
<rect x="692.8" y="267.19" width="48.4" height="10.05" fill="#fff"/>
<text x="717" y="275.90" text-anchor="middle" font-family="Liberation Sans" font-size="8.2" textLength="21.3" lengthAdjust="spacingAndGlyphs" fill="#222">AE 15</text>
<rect x="692.8" y="278.54" width="48.4" height="10.05" fill="#d9d9d9"/>
<text x="717" y="287.25" text-anchor="middle" font-family="Liberation Sans" font-size="8.2" textLength="21.3" lengthAdjust="spacingAndGlyphs" fill="#222">AE 16</text>
<rect x="692.8" y="289.90" width="48.4" height="10.05" fill="#fff"/>
<text x="717" y="298.60" text-anchor="middle" font-family="Liberation Sans" font-size="8.2" textLength="36.5" lengthAdjust="spacingAndGlyphs" fill="#222">Ethernet1</text>
<rect x="692.8" y="301.25" width="48.4" height="10.05" fill="#d9d9d9"/>
<text x="717" y="309.95" text-anchor="middle" font-family="Liberation Sans" font-size="8.2" textLength="36.5" lengthAdjust="spacingAndGlyphs" fill="#222">Ethernet2</text>
<rect x="692.8" y="312.60" width="48.4" height="10.05" fill="#fff"/>
<text x="717" y="321.31" text-anchor="middle" font-family="Liberation Sans" font-size="8.2" textLength="36.5" lengthAdjust="spacingAndGlyphs" fill="#222">Ethernet3</text>
<rect x="628" y="112.48" width="57" height="3.2" fill="#0070c0"/>
<path d="M630.8 109.67999999999999 L622.3 114.08 L630.8 118.48 Z" fill="#0070c0"/>
<path d="M683.0 109.67999999999999 L691.5 114.08 L683.0 118.48 Z" fill="#0070c0"/>
<rect x="662.1" y="114.08" width="2.9" height="12.85" fill="#0070c0"/>
<rect x="662.1" y="123.93" width="23" height="3" fill="#0070c0"/>
<path d="M683.0 121.03 L691.5 125.43 L683.0 129.83 Z" fill="#0070c0"/>
<rect x="628" y="135.18" width="57" height="3.2" fill="#0070c0"/>
<path d="M630.8 132.38 L622.3 136.78 L630.8 141.18 Z" fill="#0070c0"/>
<path d="M683.0 132.38 L691.5 136.78 L683.0 141.18 Z" fill="#0070c0"/>
<rect x="662.1" y="136.78" width="2.9" height="12.85" fill="#0070c0"/>
<rect x="662.1" y="146.64" width="23" height="3" fill="#0070c0"/>
<path d="M683.0 143.73999999999998 L691.5 148.14 L683.0 152.54 Z" fill="#0070c0"/>
<rect x="628" y="157.89" width="57" height="3.2" fill="#0070c0"/>
<path d="M630.8 155.09 L622.3 159.49 L630.8 163.89000000000001 Z" fill="#0070c0"/>
<path d="M683.0 155.09 L691.5 159.49 L683.0 163.89000000000001 Z" fill="#0070c0"/>
<rect x="662.1" y="159.49" width="2.9" height="12.85" fill="#0070c0"/>
<rect x="662.1" y="169.34" width="23" height="3" fill="#0070c0"/>
<path d="M683.0 166.44 L691.5 170.84 L683.0 175.24 Z" fill="#0070c0"/>
<rect x="628" y="180.59" width="57" height="3.2" fill="#0070c0"/>
<path d="M630.8 177.79 L622.3 182.19 L630.8 186.59 Z" fill="#0070c0"/>
<path d="M683.0 177.79 L691.5 182.19 L683.0 186.59 Z" fill="#0070c0"/>
<rect x="662.1" y="182.19" width="2.9" height="12.85" fill="#0070c0"/>
<rect x="662.1" y="192.05" width="23" height="3" fill="#0070c0"/>
<path d="M683.0 189.15 L691.5 193.55 L683.0 197.95000000000002 Z" fill="#0070c0"/>
<rect x="628" y="203.30" width="57" height="3.2" fill="#0070c0"/>
<path d="M630.8 200.5 L622.3 204.9 L630.8 209.3 Z" fill="#0070c0"/>
<path d="M683.0 200.5 L691.5 204.9 L683.0 209.3 Z" fill="#0070c0"/>
<rect x="662.1" y="204.90" width="2.9" height="12.85" fill="#0070c0"/>
<rect x="662.1" y="214.75" width="23" height="3" fill="#0070c0"/>
<path d="M683.0 211.85 L691.5 216.25 L683.0 220.65 Z" fill="#0070c0"/>
<rect x="628" y="226.01" width="57" height="3.2" fill="#0070c0"/>
<path d="M630.8 223.21 L622.3 227.61 L630.8 232.01000000000002 Z" fill="#0070c0"/>
<path d="M683.0 223.21 L691.5 227.61 L683.0 232.01000000000002 Z" fill="#0070c0"/>
<rect x="662.1" y="227.61" width="2.9" height="12.85" fill="#0070c0"/>
<rect x="662.1" y="237.46" width="23" height="3" fill="#0070c0"/>
<path d="M683.0 234.56 L691.5 238.96 L683.0 243.36 Z" fill="#0070c0"/>
<rect x="628" y="248.71" width="57" height="3.2" fill="#0070c0"/>
<path d="M630.8 245.91 L622.3 250.31 L630.8 254.71 Z" fill="#0070c0"/>
<path d="M683.0 245.91 L691.5 250.31 L683.0 254.71 Z" fill="#0070c0"/>
<rect x="662.1" y="250.31" width="2.9" height="12.85" fill="#0070c0"/>
<rect x="662.1" y="260.17" width="23" height="3" fill="#0070c0"/>
<path d="M683.0 257.27000000000004 L691.5 261.67 L683.0 266.07 Z" fill="#0070c0"/>
<rect x="628" y="271.42" width="57" height="3.2" fill="#0070c0"/>
<path d="M630.8 268.62 L622.3 273.02 L630.8 277.41999999999996 Z" fill="#0070c0"/>
<path d="M683.0 268.62 L691.5 273.02 L683.0 277.41999999999996 Z" fill="#0070c0"/>
<rect x="662.1" y="273.02" width="2.9" height="12.85" fill="#0070c0"/>
<rect x="662.1" y="282.87" width="23" height="3" fill="#0070c0"/>
<path d="M683.0 279.97 L691.5 284.37 L683.0 288.77 Z" fill="#0070c0"/>
<rect x="628" y="294.12" width="57" height="3.2" fill="#0070c0"/>
<path d="M630.8 291.32000000000005 L622.3 295.72 L630.8 300.12 Z" fill="#0070c0"/>
<path d="M683.0 291.32000000000005 L691.5 295.72 L683.0 300.12 Z" fill="#0070c0"/>
<rect x="662.1" y="295.72" width="2.9" height="12.85" fill="#0070c0"/>
<rect x="662.1" y="305.58" width="23" height="3" fill="#0070c0"/>
<path d="M683.0 302.68 L691.5 307.08 L683.0 311.47999999999996 Z" fill="#0070c0"/>
<rect x="628" y="316.83" width="57" height="3.2" fill="#0070c0"/>
<path d="M630.8 314.03000000000003 L622.3 318.43 L630.8 322.83 Z" fill="#0070c0"/>
<path d="M683.0 314.03000000000003 L691.5 318.43 L683.0 322.83 Z" fill="#0070c0"/>
</svg>
<div class="r" style="left:307px;top:456px;width:593px;height:1px;background:#a0a0a0;"></div>
<div class="r" style="left:307px;top:457px;width:593px;height:2px;background:#fafafa;"></div>
<div class="r" style="left:307px;top:459px;width:592px;height:120px;background:#fff;border-top:1px solid #e3e3e3;border-left:1px solid #e3e3e3;box-sizing:border-box;"></div>
<div class="r" style="left:307px;top:579px;width:593px;height:2px;background:#7a7a7a;"></div>
<div class="t" style="left:309.3px;top:462.54px;font-size:12px;font-weight:400;color:#0000ff;transform:scaleX(0.8925);transform-origin:0 0;">RADGalaxy2 G20093 settings have been read.</div>
<div class="r" style="left:1px;top:580px;width:899px;height:1px;background:#a0a0a0;"></div>
<div class="t" style="left:4px;top:587.29px;font-size:11px;font-weight:400;color:#000;">Release revision: 3.9.21.16</div>
<div class="r" style="left:897px;top:591px;width:2px;height:2px;background:#a0a0a0;"></div>
<div class="r" style="left:894px;top:594px;width:2px;height:2px;background:#a0a0a0;"></div>
<div class="r" style="left:897px;top:594px;width:2px;height:2px;background:#a0a0a0;"></div>
<div class="r" style="left:891px;top:597px;width:2px;height:2px;background:#a0a0a0;"></div>
<div class="r" style="left:894px;top:597px;width:2px;height:2px;background:#a0a0a0;"></div>
<div class="r" style="left:897px;top:597px;width:2px;height:2px;background:#a0a0a0;"></div>
</body></html>
